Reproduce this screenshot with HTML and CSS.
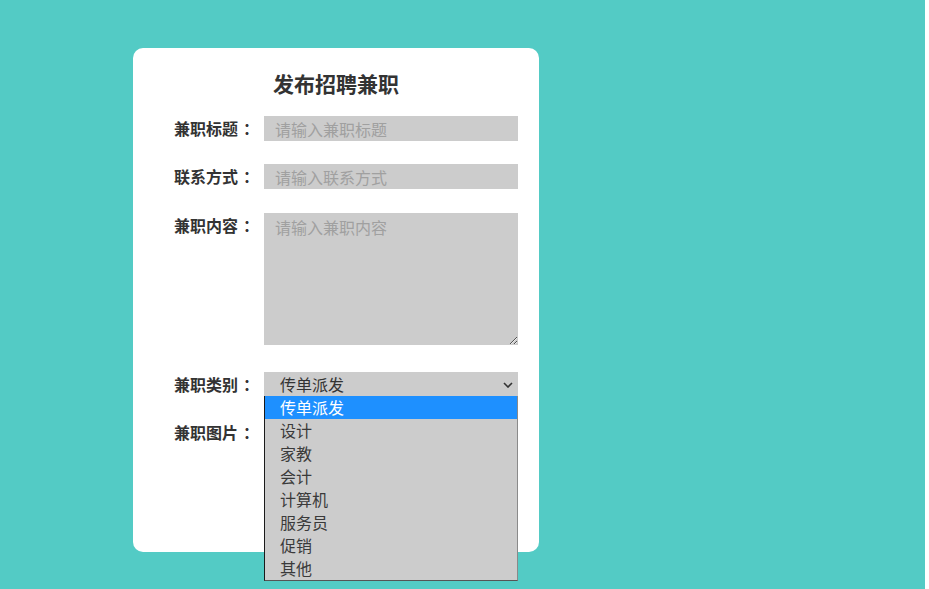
FILE: index.html
```html
<!DOCTYPE html>
<html lang="zh-CN">
<head>
<meta charset="utf-8">
<title>发布招聘兼职</title>
<link rel="stylesheet" href="styles.css">
</head>
<body>
<div class="page">
  <form class="card">
    <h1 class="title">发布招聘兼职</h1>
    <div class="row">
      <label class="label">兼职标题<span class="colon">：</span></label>
      <input class="field" type="text" placeholder="请输入兼职标题">
    </div>
    <div class="row row-wide">
      <label class="label">联系方式<span class="colon">：</span></label>
      <input class="field" type="text" placeholder="请输入联系方式">
    </div>
    <div class="row">
      <label class="label">兼职内容<span class="colon">：</span></label>
      <textarea class="area" placeholder="请输入兼职内容"></textarea>
    </div>
    <div class="row">
      <label class="label">兼职类别<span class="colon">：</span></label>
      <div class="select-wrap">
        <div class="select">传单派发</div>
        <svg class="chevron" width="10" height="6" viewBox="0 0 10 6"><path d="M1 1l4 4 4-4" fill="none" stroke="#333" stroke-width="1.6"/></svg>
        <ul class="options">
          <li class="option active">传单派发</li>
          <li class="option">设计</li>
          <li class="option">家教</li>
          <li class="option">会计</li>
          <li class="option">计算机</li>
          <li class="option">服务员</li>
          <li class="option">促销</li>
          <li class="option">其他</li>
        </ul>
      </div>
    </div>
    <div class="row">
      <label class="label">兼职图片<span class="colon">：</span></label>
    </div>
  </form>
</div>
</body>
</html>
```
FILE: styles.css
```css
* { box-sizing: border-box; }
html, body {
  margin: 0;
  padding: 0;
  background: #ffffff;
  font-family: "Noto Sans CJK SC", "Noto Sans", sans-serif;
}
.page {
  width: 925px;
  height: 589px;
  background: #53cbc5;
  padding: 48px 0 0 133px;
  overflow: hidden;
}
.card {
  width: 406px;
  height: 504px;
  background: #ffffff;
  border-radius: 10px;
  padding: 20px 21px 0 41px;
  margin: 0;
}
.title {
  margin: 0 -21px 18px -41px;
  padding: 0;
  text-align: center;
  font-size: 21px;
  line-height: 30px;
  font-weight: bold;
  color: #333333;
}
.row {
  display: flex;
  align-items: flex-start;
  margin-bottom: 23px;
}
.row-wide {
  margin-bottom: 24px;
}
.label {
  width: 80px;
  margin-right: 10px;
  font-size: 16px;
  line-height: 25px;
  font-weight: bold;
  color: #333333;
  white-space: nowrap;
  flex-shrink: 0;
}
.colon {
  display: inline-block;
  margin-left: 5px;
}
.field {
  width: 254px;
  height: 25px;
  border: none;
  outline: none;
  background: #cccccc;
  padding: 0 11px;
  font-family: inherit;
  font-size: 16px;
  color: #333333;
}
.field::placeholder, .area::placeholder {
  color: #a0a0a0;
}
.area {
  width: 254px;
  height: 132px;
  border: none;
  outline: none;
  background: #cccccc;
  padding: 4px 11px;
  font-family: inherit;
  font-size: 16px;
  line-height: 20px;
  margin-bottom: 4px;
  color: #333333;
}
.select-wrap {
  position: relative;
  width: 254px;
  height: 24px;
}
.select {
  width: 254px;
  height: 24px;
  background: #cccccc;
  padding-left: 16px;
  font-size: 16px;
  line-height: 25px;
  color: #333333;
}
.chevron {
  position: absolute;
  right: 5px;
  top: 10px;
}
.options {
  position: absolute;
  left: 0;
  top: 24px;
  width: 254px;
  margin: 0;
  padding: 0;
  list-style: none;
  background: #cccccc;
  border-left: 1px solid #1a1a1a;
  border-right: 1px solid #8a8a8a;
  border-bottom: 1px solid #555555;
  z-index: 2;
}
.option {
  height: 23px;
  line-height: 23px;
  padding-left: 15px;
  font-size: 16px;
  color: #3a3a3a;
}
.option.active {
  background: #1e90ff;
  color: #ffffff;
}
```
